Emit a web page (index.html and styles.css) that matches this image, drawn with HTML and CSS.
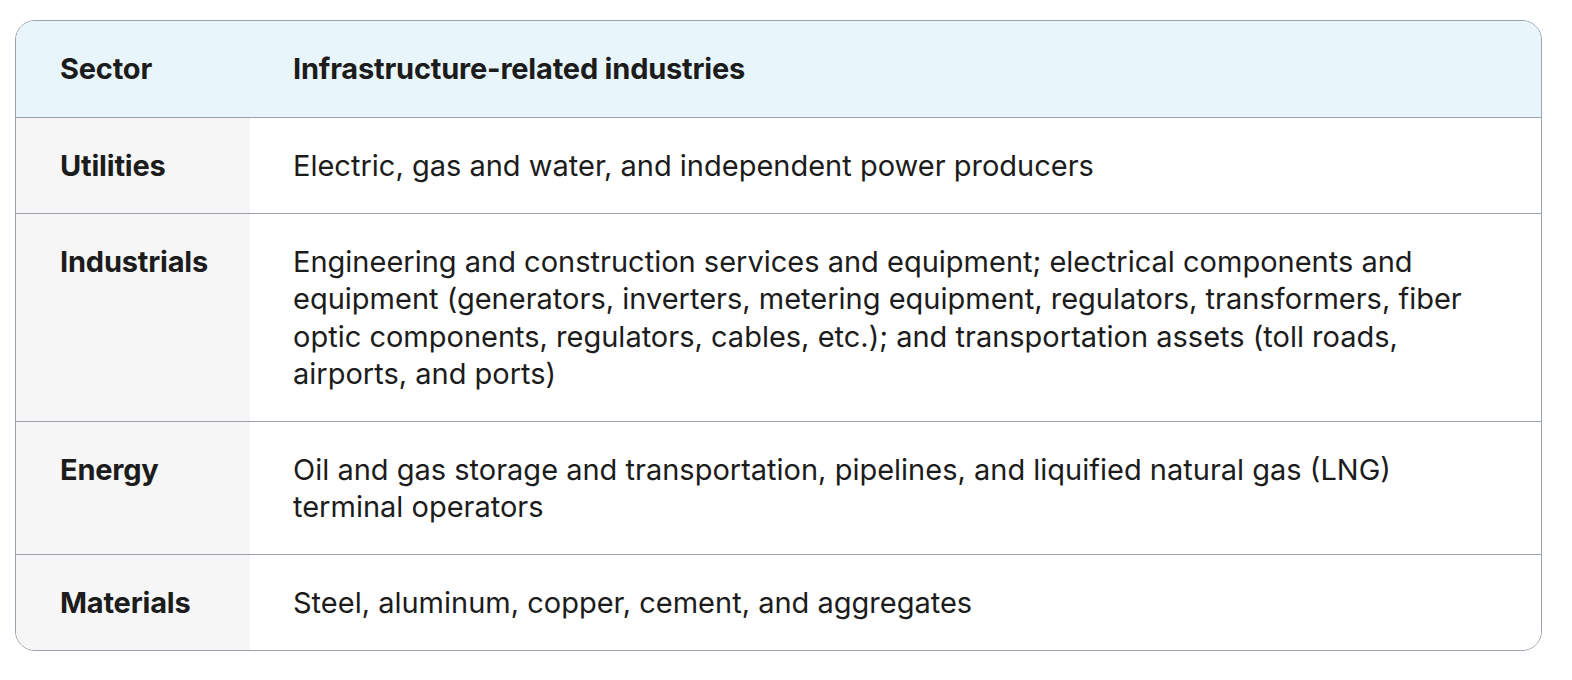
FILE: index.html
```html
<!DOCTYPE html>
<html lang="en">
<head>
<meta charset="utf-8">
<title>Infrastructure-related industries by sector</title>
<link rel="stylesheet" href="styles.css">
</head>
<body>
<div class="table-wrap">
  <table class="sector-table">
    <thead>
      <tr>
        <th class="col-sector">Sector</th>
        <th class="col-industries">Infrastructure-related industries</th>
      </tr>
    </thead>
    <tbody>
      <tr>
        <th class="col-sector" scope="row">Utilities</th>
        <td class="col-industries">Electric, gas and water, and independent power producers</td>
      </tr>
      <tr>
        <th class="col-sector" scope="row">Industrials</th>
        <td class="col-industries">Engineering and construction services and equipment; electrical components and equipment (generators, inverters, metering equipment, regulators, transformers, fiber optic components, regulators, cables, etc.); and transportation assets (toll roads, airports, and ports)</td>
      </tr>
      <tr>
        <th class="col-sector" scope="row">Energy</th>
        <td class="col-industries">Oil and gas storage and transportation, pipelines, and liquified natural gas (LNG) terminal operators</td>
      </tr>
      <tr>
        <th class="col-sector" scope="row">Materials</th>
        <td class="col-industries">Steel, aluminum, copper, cement, and aggregates</td>
      </tr>
    </tbody>
  </table>
</div>
</body>
</html>
```
FILE: styles.css
```css
html, body {
  margin: 0;
  padding: 0;
  background: #ffffff;
}

body {
  padding: 20px 30px 0 15px;
  font-family: "Inter", "Noto Sans", "Liberation Sans", sans-serif;
  color: #1c1c1c;
}

.table-wrap {
  border: 1px solid #9aa2ad;
  border-radius: 20px;
  overflow: hidden;
}

.sector-table {
  width: 100%;
  border-collapse: separate;
  border-spacing: 0;
  table-layout: fixed;
}

.sector-table th,
.sector-table td {
  font-size: 29px;
  line-height: 37.15px;
  text-align: left;
  vertical-align: top;
  padding: 29px 44px 29px 44px;
}

.sector-table .col-industries {
  padding-left: 43px;
}

.sector-table th {
  font-weight: 700;
  letter-spacing: -0.2px;
}

.sector-table td {
  font-weight: 400;
}

.col-sector {
  width: 146px;
}

.sector-table thead th {
  background: #e8f5fb;
  padding-top: 29px;
  padding-bottom: 30px;
}

.sector-table tbody th {
  background: #f6f6f6;
}

.sector-table tbody td {
  background: #ffffff;
}

.sector-table tbody tr th,
.sector-table tbody tr td {
  border-top: 1px solid #9aa2ad;
}
```
